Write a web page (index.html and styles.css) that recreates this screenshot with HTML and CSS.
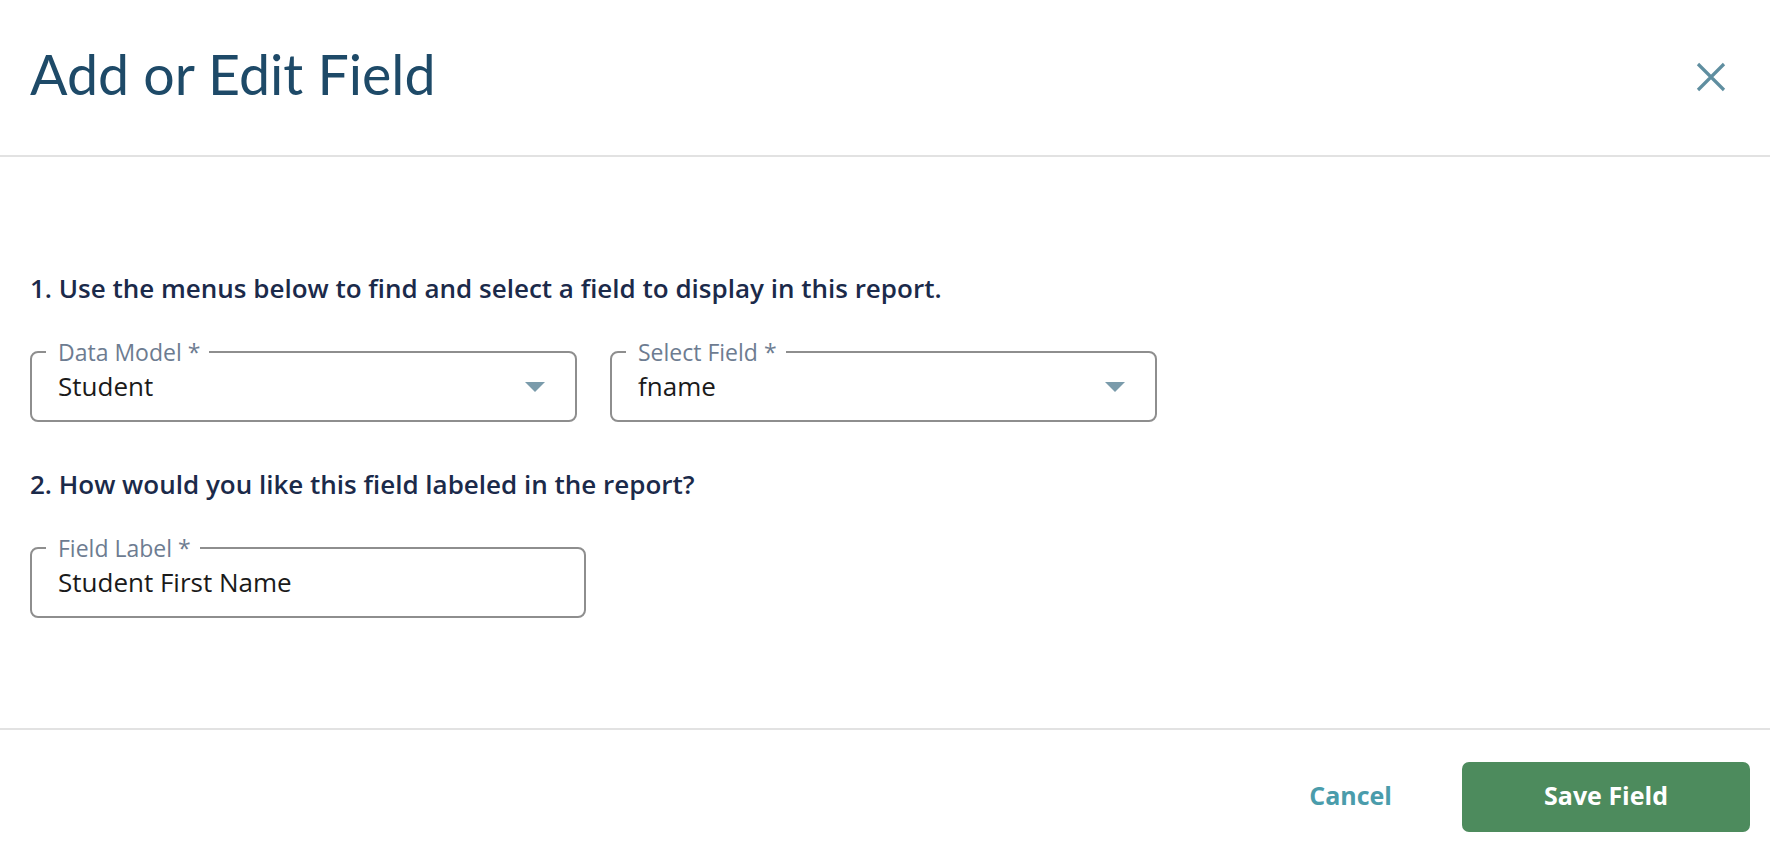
FILE: index.html
```html
<!DOCTYPE html>
<html lang="en">
<head>
    <meta charset="UTF-8">
    <meta name="viewport" content="width=device-width, initial-scale=1.0">
    <title>Add or Edit Field</title>
    <link rel="stylesheet" href="styles.css">
</head>
<body>
    <div class="dialog">
        <div class="dialog-header">
            <h1 class="dialog-title">Add or Edit Field</h1>
            <button class="close-bttn" type="button" aria-label="Close">
                <svg width="30" height="30" viewBox="0 0 30 30">
                    <path d="M2 2 L28 28 M28 2 L2 28" stroke="#5f8ea0" stroke-width="3.2" fill="none"/>
                </svg>
            </button>
        </div>

        <div class="dialog-body">
            <p class="step-text">1. Use the menus below to find and select a field to display in this report.</p>
            <div class="fields-row">
                <fieldset class="outlined select-box">
                    <legend>Data Model *</legend>
                    <div class="field-value">
                        <span>Student</span>
                        <svg class="caret" width="20" height="10" viewBox="0 0 20 10"><path d="M0 0 L20 0 L10 10 Z" fill="#7a9bab"/></svg>
                    </div>
                </fieldset>
                <fieldset class="outlined select-box">
                    <legend>Select Field *</legend>
                    <div class="field-value">
                        <span>fname</span>
                        <svg class="caret" width="20" height="10" viewBox="0 0 20 10"><path d="M0 0 L20 0 L10 10 Z" fill="#7a9bab"/></svg>
                    </div>
                </fieldset>
            </div>

            <p class="step-text step-two">2. How would you like this field labeled in the report?</p>
            <fieldset class="outlined label-box">
                <legend>Field Label *</legend>
                <div class="field-value">
                    <span>Student First Name</span>
                </div>
            </fieldset>
        </div>

        <div class="dialog-footer">
            <button class="bttn-cancel" type="button">Cancel</button>
            <button class="bttn-save" type="button">Save Field</button>
        </div>
    </div>
</body>
</html>
```

FILE: styles.css
```css
body {
    margin: 0;
    background: #ffffff;
    font-family: "Open Sans", "Noto Sans", sans-serif;
}

.dialog {
    display: flex;
    flex-direction: column;
    width: 100%;
}

.dialog-header {
    height: 155px;
    display: flex;
    align-items: center;
    justify-content: space-between;
    padding: 0 44px 0 30px;
    border-bottom: 2px solid #e2e2e2;
}

.dialog-title {
    margin: 0 0 8px 0;
    font-family: "Lato", sans-serif;
    font-size: 55.5px;
    font-weight: 400;
    color: #1e4a68;
}

.close-bttn {
    background: none;
    border: none;
    padding: 0;
    margin-top: -2px;
    cursor: pointer;
    display: flex;
}

.dialog-body {
    padding: 114px 30px 0 30px;
    height: 457px;
}

.step-text {
    margin: 0;
    font-size: 26px;
    line-height: 34px;
    font-weight: 600;
    color: #1b2a4a;
}

.fields-row {
    display: flex;
    gap: 33px;
    margin-top: 34px;
}

.outlined {
    margin: 0;
    padding: 0 30px 19px 26px;
    border: 2px solid #8e8e8e;
    border-radius: 8px;
    min-width: 0;
}

.outlined legend {
    padding: 0 9px 0 12px;
    margin-left: -12px;
    font-size: 23px;
    line-height: 26px;
    color: #6d7c91;
}

.select-box {
    width: 487px;
}

.label-box {
    width: 496px;
    margin-top: 34px;
}

.field-value {
    display: flex;
    align-items: center;
    justify-content: space-between;
    margin-top: 6px;
    font-size: 26px;
    line-height: 30px;
    color: #1a1a1a;
}

.caret {
    margin-top: 2px;
}

.step-two {
    margin-top: 45px;
}

.dialog-footer {
    border-top: 2px solid #e2e2e2;
    display: flex;
    justify-content: flex-end;
    align-items: center;
    gap: 32px;
    padding: 32px 20px 0 0;
}

.bttn-cancel {
    background: none;
    border: none;
    padding: 0 38px 4px 38px;
    font-family: "Open Sans", "Noto Sans", sans-serif;
    font-size: 25px;
    font-weight: 700;
    color: #4a9cab;
    cursor: pointer;
}

.bttn-save {
    width: 288px;
    height: 70px;
    padding: 0 0 4px 0;
    border: none;
    border-radius: 7px;
    background-color: #4d8b5d;
    color: #ffffff;
    font-family: "Open Sans", "Noto Sans", sans-serif;
    font-size: 25px;
    font-weight: 700;
    cursor: pointer;
}
```
